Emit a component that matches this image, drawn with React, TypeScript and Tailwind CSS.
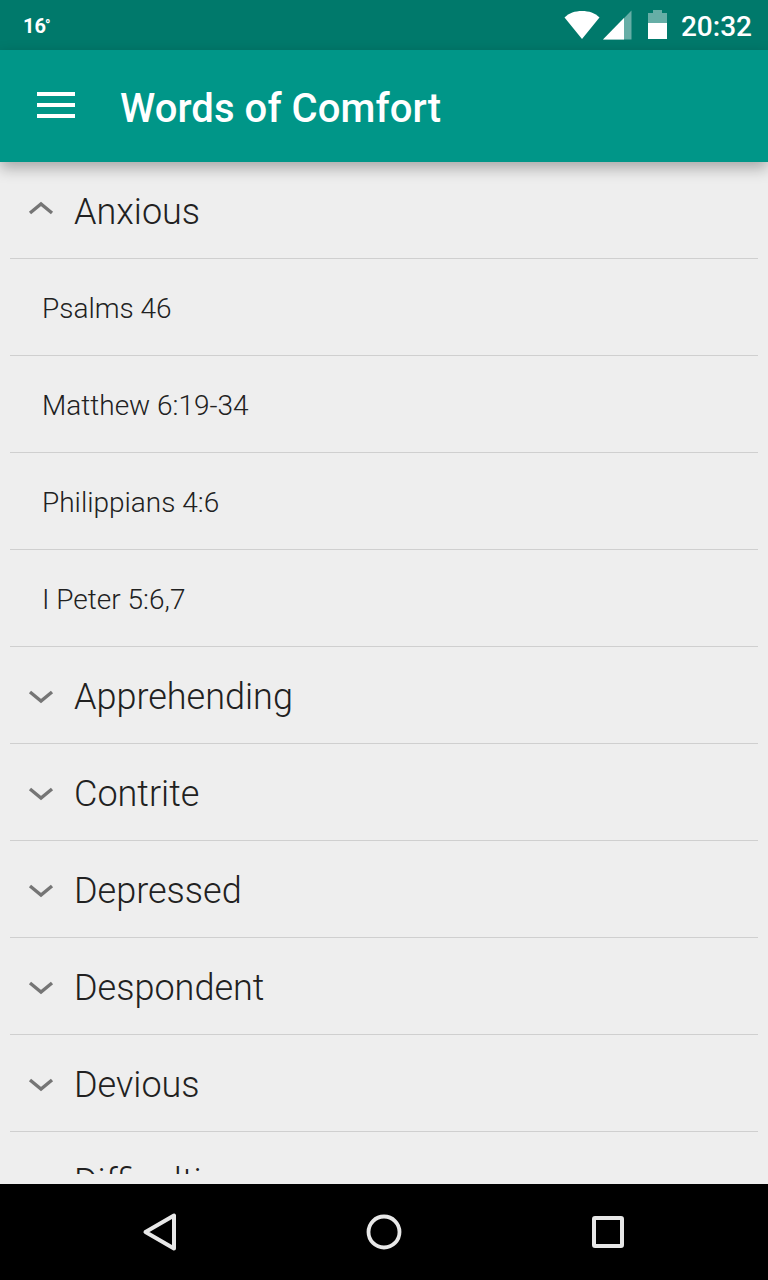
import React from 'react';

interface Topic {
  name: string;
  passages?: string[];
}

const topics: Topic[] = [
  { name: 'Anxious', passages: ['Psalms 46', 'Matthew 6:19-34', 'Philippians 4:6', 'I Peter 5:6,7'] },
  { name: 'Apprehending' },
  { name: 'Contrite' },
  { name: 'Depressed' },
  { name: 'Despondent' },
  { name: 'Devious' },
  { name: 'Difficulties' }
];

const StatusBar: React.FC = () => (
  <div className="flex h-[50px] shrink-0 items-center bg-[#00796b] pl-[23px] pr-4 text-white">
    <span className="pt-0.5 text-[20px] leading-[48px] font-bold">16</span>
    <span className="-ml-px text-[14px] leading-[38px] font-black">°</span>

    <div className="ml-auto flex items-center">
      {/* Wifi */}
      <svg width="36" height="30" viewBox="0 0 36 30" fill="#fff">
        <path d="M0.5 7.5C5 3 11 1 18 1s13 2 17.5 6.5L18 29z" />
      </svg>
      {/* Signal */}
      <svg className="ml-[3px]" width="29" height="30" viewBox="0 0 29 30" fill="#fff">
        <path d="M0 29.5L28.5 0.5v29z" fillOpacity="0.4" />
        <path d="M0 29.5L21 8v21.5z" />
      </svg>
      {/* Battery */}
      <svg className="ml-4" width="19" height="30" viewBox="0 0 19 30" fill="#fff">
        <path d="M0 3h5V0h9v3h5v10H0z" fillOpacity="0.4" />
        <path d="M0 13h19v16H0z" />
      </svg>
      <span className="ml-3.5 pt-1 text-[28px] leading-[46px] font-medium">20:32</span>
    </div>
  </div>
);

const Toolbar: React.FC = () => (
  <header className="relative z-10 flex h-28 shrink-0 items-center bg-[#009688] pl-[37px] text-white shadow-[0_6px_14px_rgba(0,0,0,0.3)]">
    <button type="button" aria-label="Menu" className="flex w-[38px] flex-col gap-[7px] pb-0.5">
      <span className="h-1 w-full bg-white" />
      <span className="h-1 w-full bg-white" />
      <span className="h-1 w-full bg-white" />
    </button>
    <h1 className="ml-[45px] pt-1.5 text-[40px] leading-[48px] font-medium tracking-[0.08px]">Words of Comfort</h1>
  </header>
);

const Chevron: React.FC<{ expanded: boolean }> = ({ expanded }) => (
  <svg width="26" height="20" viewBox="0 0 26 20" fill="none" stroke="#757575" strokeWidth="3.4">
    <path d={expanded ? 'M2 13L13 4 24 13' : 'M2 7L13 16 24 7'} />
  </svg>
);

const TopicRow: React.FC<{ topic: Topic }> = ({ topic }) => (
  <>
    <div className="flex h-[97px] shrink-0 items-center border-b border-[#cfcfcf] pl-[18px]">
      <Chevron expanded={!!topic.passages} />
      <span className="ml-5 pt-1 text-[36px] leading-[48px]">{topic.name}</span>
    </div>
    {topic.passages?.map(passage => (
      <div
        key={passage}
        className="flex h-[97px] shrink-0 items-center border-b border-[#cfcfcf] pt-1 pl-8 text-[28px]"
      >
        {passage}
      </div>
    ))}
  </>
);

const NavigationBar: React.FC = () => (
  <nav className="flex h-24 shrink-0 items-center justify-center gap-[184px] bg-black">
    <svg width="40" height="40" viewBox="0 0 40 40" fill="none" stroke="#e8e8e8" strokeWidth="4" strokeLinejoin="round">
      <path d="M5.500 20L34 3.500v33z" />
    </svg>
    <svg width="40" height="40" viewBox="0 0 40 40" fill="none" stroke="#e8e8e8" strokeWidth="3.8">
      <circle cx="20" cy="20" r="15.500" />
    </svg>
    <svg width="40" height="40" viewBox="0 0 40 40" fill="none" stroke="#e8e8e8" strokeWidth="4">
      <rect x="6" y="6" width="28" height="28" rx="1" />
    </svg>
  </nav>
);

const App: React.FC = () => {
  return (
    <div className="flex h-[1280px] w-[768px] flex-col overflow-hidden bg-[#eee] font-['Roboto',sans-serif]">
      <StatusBar />
      <Toolbar />
      <main className="mx-2.5 mb-2.5 flex min-h-0 flex-1 flex-col overflow-hidden font-light text-[#212121]">
        {topics.map(topic => (
          <TopicRow key={topic.name} topic={topic} />
        ))}
      </main>
      <NavigationBar />
    </div>
  );
};

export default App;
